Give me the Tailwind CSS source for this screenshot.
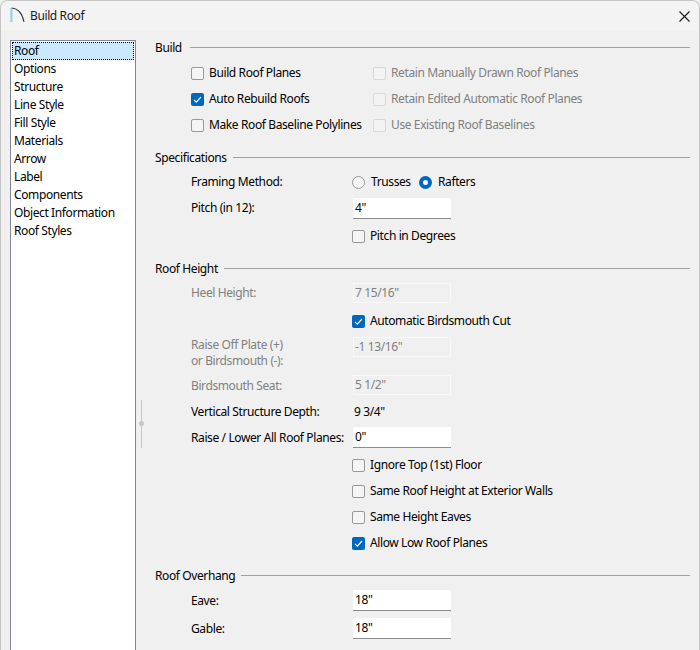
<!DOCTYPE html>
<html lang="en">
<head>
    <meta charset="UTF-8">
    <title>Build Roof</title>
    <script src="https://cdn.jsdelivr.net/npm/@tailwindcss/browser@4"></script>
</head>
<body class="bg-[#f0f0f0]">
<div class="w-[700px] h-[650px] overflow-hidden flex flex-col bg-[#f0f0f0] border-x border-t border-[#c4c4c4] rounded-t-lg font-['Noto_Sans','Open_Sans',sans-serif] text-[12px] text-black tracking-[-0.39px]">
    <!-- title bar -->
    <div class="h-[30px] shrink-0 flex items-center bg-[#f3f3f3] pl-[9px] pr-[9px]">
        <svg class="w-[15px] h-[16px] -mt-[2px]" viewBox="0 0 15 16" fill="none">
            <path d="M1 1 V15 H3 V3 Z" fill="#bfe3f7"/>
            <path d="M1.5 1 C8 1.5 12.5 7 14 15" stroke="#3a3a3a" stroke-width="1.1"/>
            <path d="M1 1 V15" stroke="#8ab6cf" stroke-width="1"/>
        </svg>
        <span class="ml-[5px] flex-1 text-[#1a1a1a]">Build Roof</span>
        <svg class="w-[11px] h-[11px]" viewBox="0 0 11 11" fill="none" stroke="#1a1a1a" stroke-width="1.1"><path d="M.5.5l10 10M10.5.5l-10 10"/></svg>
    </div>

    <div class="flex-1 flex min-h-0 relative">
        <!-- category list -->
        <div class="w-[126px] ml-[9px] mt-[9px] shrink-0 bg-white border-x border-t border-[#828790] pt-px px-px leading-[18px]">
            <div class="h-[18px] pl-px bg-[#cce8ff] border border-dotted border-black leading-[16px]">Roof</div>
            <div class="h-[18px] pl-[2px]">Options</div>
            <div class="h-[18px] pl-[2px]">Structure</div>
            <div class="h-[18px] pl-[2px]">Line Style</div>
            <div class="h-[18px] pl-[2px]">Fill Style</div>
            <div class="h-[18px] pl-[2px]">Materials</div>
            <div class="h-[18px] pl-[2px]">Arrow</div>
            <div class="h-[18px] pl-[2px]">Label</div>
            <div class="h-[18px] pl-[2px]">Components</div>
            <div class="h-[18px] pl-[2px]">Object Information</div>
            <div class="h-[18px] pl-[2px]">Roof Styles</div>
        </div>

        <!-- splitter grip -->
        <div class="absolute left-[140px] top-[369px] w-px h-[48px] bg-[#c8c8c8]"></div>
        <div class="absolute left-[138px] top-[390px] w-[5px] h-[5px] rounded-full bg-[#c8c8c8]"></div>

        <!-- settings -->
        <div class="ml-[19px] w-[535px] pt-[8px]">
            <!-- Build -->
            <div class="h-[18px] flex items-center gap-[8px]"><span>Build</span><div class="flex-1 h-px mb-[2px] bg-[#a0a0a0]"></div></div>
            <div class="mt-[3px] pl-[36px] grid grid-cols-[182px_1fr] auto-rows-[26px] items-center">
                <label class="flex items-center gap-[5px]"><span class="w-[13px] h-[13px] rounded-[2px] border border-[#999] bg-[#f5f5f5]"></span>Build Roof Planes</label>
                <label class="flex items-center gap-[5px] text-[#808080]"><span class="w-[13px] h-[13px] rounded-[2px] border border-[#d6d6d6] bg-[#f3f3f3]"></span>Retain Manually Drawn Roof Planes</label>
                <label class="flex items-center gap-[5px]"><span class="w-[13px] h-[13px] rounded-[2px] bg-[#0067c0] flex items-center justify-center"><svg class="w-[9px] h-[9px]" viewBox="0 0 9 9" fill="none" stroke="#fff" stroke-width="1.2"><path d="M1 4.8l2.3 2.3L8 2"/></svg></span>Auto Rebuild Roofs</label>
                <label class="flex items-center gap-[5px] text-[#808080]"><span class="w-[13px] h-[13px] rounded-[2px] border border-[#d6d6d6] bg-[#f3f3f3]"></span>Retain Edited Automatic Roof Planes</label>
                <label class="flex items-center gap-[5px]"><span class="w-[13px] h-[13px] rounded-[2px] border border-[#999] bg-[#f5f5f5]"></span>Make Roof Baseline Polylines</label>
                <label class="flex items-center gap-[5px] text-[#808080]"><span class="w-[13px] h-[13px] rounded-[2px] border border-[#d6d6d6] bg-[#f3f3f3]"></span>Use Existing Roof Baselines</label>
            </div>

            <!-- Specifications -->
            <div class="mt-[11px] h-[18px] flex items-center gap-[6px]"><span>Specifications</span><div class="flex-1 h-px mb-[2px] bg-[#a0a0a0]"></div></div>
            <div class="mt-[2px] pl-[36px] grid grid-cols-[162px_1fr] auto-rows-[26px] items-center">
                <span>Framing Method:</span>
                <div class="flex items-center -ml-px">
                    <span class="w-[13px] h-[13px] rounded-full border border-[#999] bg-[#f5f5f5]"></span>
                    <span class="ml-[6px] w-[48px]">Trusses</span>
                    <span class="w-[13px] h-[13px] rounded-full border-[4px] border-[#0067c0] bg-white"></span>
                    <span class="ml-[6px]">Rafters</span>
                </div>
                <span>Pitch (in 12):</span>
                <div class="w-[98px] h-[21px] self-start mt-[3px] pl-[2px] bg-white border-b border-[#8c8c8c] leading-[20px]">4"</div>
            </div>
            <div class="mt-[2px] h-[26px] pl-[197px] flex items-center gap-[5px]"><span class="w-[13px] h-[13px] rounded-[2px] border border-[#999] bg-[#f5f5f5]"></span>Pitch in Degrees</div>

            <!-- Roof Height -->
            <div class="mt-[11px] h-[18px] flex items-center gap-[6px]"><span>Roof Height</span><div class="flex-1 h-px mb-[2px] bg-[#a0a0a0]"></div></div>
            <div class="mt-[2px] h-[26px] pl-[36px] grid grid-cols-[162px_1fr] items-center">
                <span class="text-[#808080]">Heel Height:</span>
                <div class="w-[98px] h-[20px] pl-px border border-[#f9f9f9] text-[#808080] leading-[18px]">7 15/16"</div>
            </div>
            <div class="mt-[2px] h-[26px] pl-[197px] flex items-center gap-[5px]"><span class="w-[13px] h-[13px] rounded-[2px] bg-[#0067c0] flex items-center justify-center"><svg class="w-[9px] h-[9px]" viewBox="0 0 9 9" fill="none" stroke="#fff" stroke-width="1.2"><path d="M1 4.8l2.3 2.3L8 2"/></svg></span>Automatic Birdsmouth Cut</div>
            <div class="h-[38px] pl-[36px] grid grid-cols-[162px_1fr] items-center">
                <span class="text-[#808080] leading-[16px]">Raise Off Plate (+)<br>or Birdsmouth (-):</span>
                <div class="w-[98px] h-[20px] pl-px border border-[#f9f9f9] text-[#808080] leading-[18px] self-start mt-[3px]">-1 13/16"</div>
            </div>
            <div class="mt-px h-[26px] pl-[36px] grid grid-cols-[162px_1fr] items-center">
                <span class="text-[#808080]">Birdsmouth Seat:</span>
                <div class="w-[98px] h-[20px] pl-px border border-[#f9f9f9] text-[#808080] leading-[18px] self-start mt-[2px]">5 1/2"</div>
            </div>
            <div class="h-[26px] pl-[36px] grid grid-cols-[163px_1fr] items-center">
                <span>Vertical Structure Depth:</span>
                <span>9 3/4"</span>
            </div>
            <div class="h-[26px] pl-[36px] grid grid-cols-[162px_1fr] items-center">
                <span>Raise / Lower All Roof Planes:</span>
                <div class="w-[98px] h-[21px] self-start mt-[2px] pl-[2px] bg-white border-b border-[#8c8c8c] leading-[20px]">0"</div>
            </div>
            <div class="mt-px pl-[197px] grid auto-rows-[26px] items-center">
                <label class="flex items-center gap-[5px]"><span class="w-[13px] h-[13px] rounded-[2px] border border-[#999] bg-[#f5f5f5]"></span>Ignore Top (1st) Floor</label>
                <label class="flex items-center gap-[5px]"><span class="w-[13px] h-[13px] rounded-[2px] border border-[#999] bg-[#f5f5f5]"></span>Same Roof Height at Exterior Walls</label>
                <label class="flex items-center gap-[5px]"><span class="w-[13px] h-[13px] rounded-[2px] border border-[#999] bg-[#f5f5f5]"></span>Same Height Eaves</label>
                <label class="flex items-center gap-[5px]"><span class="w-[13px] h-[13px] rounded-[2px] bg-[#0067c0] flex items-center justify-center"><svg class="w-[9px] h-[9px]" viewBox="0 0 9 9" fill="none" stroke="#fff" stroke-width="1.2"><path d="M1 4.8l2.3 2.3L8 2"/></svg></span>Allow Low Roof Planes</label>
            </div>

            <!-- Roof Overhang -->
            <div class="mt-[11px] h-[18px] flex items-center gap-[6px]"><span>Roof Overhang</span><div class="flex-1 h-px mb-[2px] bg-[#a0a0a0]"></div></div>
            <div class="mt-[3px] h-[26px] pl-[36px] grid grid-cols-[162px_1fr] items-center">
                <span>Eave:</span>
                <div class="w-[98px] h-[21px] self-start mt-[2px] pl-[2px] bg-white border-b border-[#8c8c8c] leading-[20px]">18"</div>
            </div>
            <div class="mt-[2px] h-[26px] pl-[36px] grid grid-cols-[162px_1fr] items-center">
                <span>Gable:</span>
                <div class="w-[98px] h-[21px] self-start mt-[2px] pl-[2px] bg-white border-b border-[#8c8c8c] leading-[20px]">18"</div>
            </div>
        </div>
    </div>
</div>
</body>
</html>
